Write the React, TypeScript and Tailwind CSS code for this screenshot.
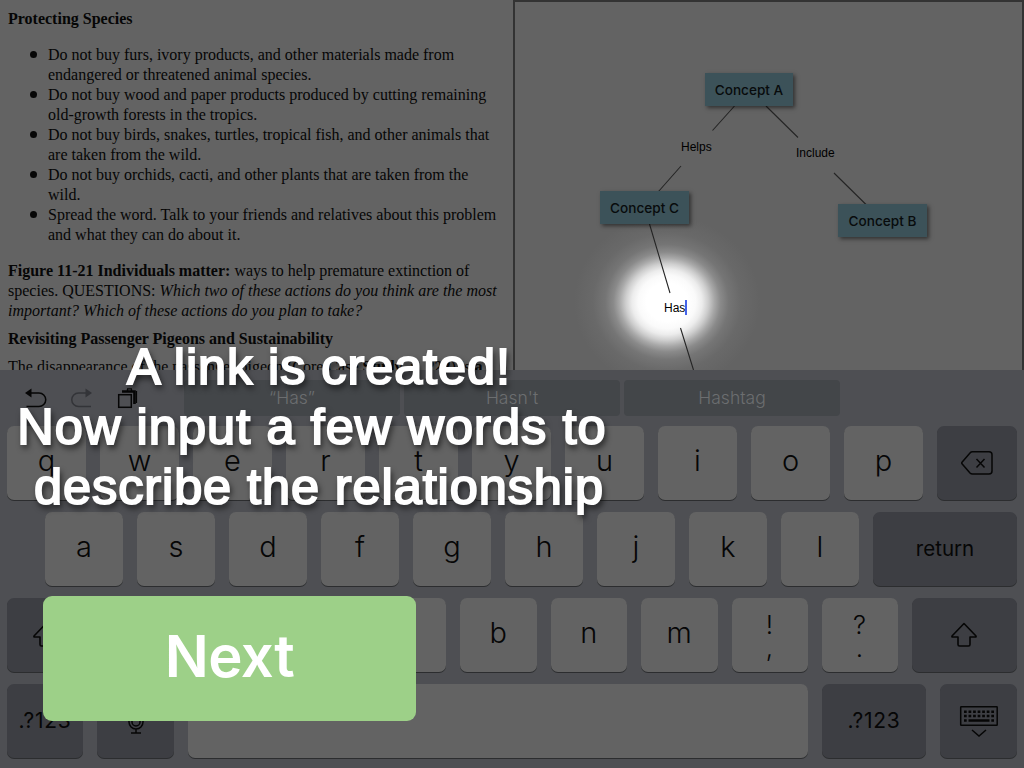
import React from "react";

const INK = "text-[#060606]";

function Key({ label, className = "", dark = false, children }: { label?: string; className?: string; dark?: boolean; children?: React.ReactNode }) {
  return (
    <div
      className={`flex h-[73.5px] shrink-0 items-center justify-center rounded-[7px] shadow-[0_1px_0_#2c2d2f] ${dark ? "bg-[#3d3e43]" : "bg-[#636363]"} ${className}`}
    >
      {label ? <span className={`-mt-[5px] text-[29px] leading-none font-[350] ${INK}`}>{label}</span> : children}
    </div>
  );
}

function TwoLevelKey({ top, bottom }: { top: string; bottom: string }) {
  return (
    <Key className="w-[76px]">
      <div className="flex flex-col items-center pt-[3px] text-[26px] leading-[26px] font-[350] text-[#060606]">
        <span>{top}</span>
        <span className="-mt-[3px]">{bottom}</span>
      </div>
    </Key>
  );
}

function ShiftIcon() {
  return (
    <svg width="28" height="26" viewBox="0 0 28 26" fill="none" stroke="#060606" strokeWidth="1.6" strokeLinejoin="round">
      <path d="M14 1.500 L26 14 Q26.400 15 25.400 15 H20 V22.500 Q20 24 18.500 24 H9.500 Q8 24 8 22.500 V15 H2.600 Q1.600 15 2 14 Z" />
    </svg>
  );
}

function Bullet({ children }: { children: React.ReactNode }) {
  return (
    <li className="flex">
      <span className="mt-[6px] mr-[11px] ml-[22px] h-[7px] w-[7px] shrink-0 rounded-full bg-[#060606]" />
      <span>{children}</span>
    </li>
  );
}

function Article() {
  return (
    <article className="h-[370px] w-[513px] shrink-0 overflow-hidden bg-[#636363] pl-2 font-['Liberation_Serif',serif] text-[16px] leading-5 whitespace-nowrap text-[#060606]">
      <h3 className="mt-[9px] font-bold">Protecting Species</h3>
      <ul className="mt-4">
        <Bullet>Do not buy furs, ivory products, and other materials made from<br />endangered or threatened animal species.</Bullet>
        <Bullet>Do not buy wood and paper products produced by cutting remaining<br />old-growth forests in the tropics.</Bullet>
        <Bullet>Do not buy birds, snakes, turtles, tropical fish, and other animals that<br />are taken from the wild.</Bullet>
        <Bullet>Do not buy orchids, cacti, and other plants that are taken from the<br />wild.</Bullet>
        <Bullet>Spread the word. Talk to your friends and relatives about this problem<br />and what they can do about it.</Bullet>
      </ul>
      <p className="mt-4">
        <b>Figure 11-21 Individuals matter:</b> ways to help premature extinction of<br />
        species. QUESTIONS: <i>Which two of these actions do you think are the most<br />important? Which of these actions do you plan to take?</i>
      </p>
      <h3 className="mt-2 font-bold">Revisiting Passenger Pigeons and Sustainability</h3>
      <p className="mt-2">The disappearance of the passenger pigeon (Core Case <b>Study</b>, p. <b>222</b>) is <b>a</b></p>
    </article>
  );
}

function Node({ label, className }: { label: string; className: string }) {
  return (
    <div className={`absolute flex h-[33px] items-center justify-center bg-[#3c5259] font-['Inter',sans-serif] text-[13.6px] font-medium text-[#080b0c] shadow-[2px_2px_4px_rgba(0,0,0,0.5)] ${className}`}>
      {label}
    </div>
  );
}

function ConceptMap() {
  return (
    <section className="relative h-[370px] w-[511px] shrink-0 overflow-hidden border-x-2 border-t-2 border-[#333333] bg-[#636363] font-['Liberation_Sans',sans-serif] text-[12px] leading-[14px] text-black">
      <div className="absolute top-[200px] left-[52px] h-[200px] w-[200px] bg-[radial-gradient(ellipse_103px_96px_at_center,#fff_0%,#fff_20%,#fafafa_28%,#ececec_34%,#cecece_40%,#a8a8a8_46%,#8a8a8a_52%,#757575_60%,#696969_72%,#636363_90%)]" />
      <svg className="absolute -top-[2px] -left-[3px]" width="512" height="370" viewBox="512 0 512 370" stroke="#252525" strokeWidth="1.1">
        <path d="M734.500 106 L712.500 130.500 M681 166 L658.500 191.500 M766 106 L798 137.500 M834 173 L866 204.500 M649.500 224 L670 293 M680.500 328 L693.500 370" fill="none" />
      </svg>
      <Node label="Concept A" className="top-[71px] left-[190px] w-[88px]" />
      <Node label="Concept C" className="top-[189px] left-[85px] w-[89px]" />
      <Node label="Concept B" className="top-[202px] left-[323px] w-[89px]" />
      <span className="absolute top-[138px] left-[166px]">Helps</span>
      <span className="absolute top-[144px] left-[281px]">Include</span>
      <span className="absolute top-[299px] left-[149px]">Has</span>
      <span className="absolute top-[298px] left-[170px] h-[15px] w-[2px] bg-[#4664e8]" />
    </section>
  );
}

function Keyboard() {
  return (
    <section className="flex h-[398px] flex-col bg-[#4e4f53] font-['Inter',sans-serif]">
      <div className="flex h-14 items-start pt-[10px]">
        <div className="flex w-[184px] pt-[8px] pl-[25px]">
          <svg className="mr-[22px]" width="24" height="20" viewBox="0 0 24 20" fill="none" stroke="#060606" strokeWidth="1.5">
            <path d="M3 5 H14 A6.500 6.500 0 0 1 14 18.500 H1.500" /><path d="M0 5 L6.500 0.500 V9.500 Z" fill="#060606" stroke="none" />
          </svg>
          <svg className="mr-[22px]" width="24" height="20" viewBox="0 0 24 20" fill="none" stroke="#333438" strokeWidth="1.5">
            <path d="M18 5 H7.500 A6.500 6.500 0 0 0 7.500 18.500 H20" /><path d="M21 5 L14.500 0.500 V9.500 Z" fill="#333438" stroke="none" />
          </svg>
          <svg width="22" height="22" viewBox="0 0 22 22" fill="none" stroke="#060606">
            <rect x="1.700" y="6.700" width="12.600" height="12.600" strokeWidth="1.500" />
            <path d="M5 3.500 H17.500 V16" strokeWidth="2.600" />
            <path d="M10 .9 H15 M10.500 1 V3 M14.500 1 V3" strokeWidth="1.300" />
            <path d="M19.500 3 V15" strokeWidth="1.200" />
          </svg>
        </div>
        <div className="flex gap-1 text-[17.5px] text-[#6c6e70]">
          {["“Has”", "Hasn't", "Hashtag"].map((word) => (
            <div key={word} className="flex h-9 w-[216px] items-center justify-center rounded-[4px] bg-[#434649] font-[350]">{word}</div>
          ))}
        </div>
      </div>
      <div className="flex flex-col gap-[12.5px] pl-[7px]">
        <div className="flex gap-[14px]">
          {"qwertyuiop".split("").map((k) => <Key key={k} label={k} className="w-[79px]" />)}
          <Key dark className="w-20">
            <svg width="32" height="24" viewBox="0 0 32 24" fill="none" stroke="#060606" strokeWidth="1.5" strokeLinejoin="round">
              <path d="M11.500 .8 H28 Q31 .8 31 3.800 V20 Q31 23 28 23 H11.500 Q10 23 9 22 L1 12.800 Q.5 12 1 11.200 L9 2 Q10 .8 11.500 .8 Z M15.500 8 L23.500 16.500 M23.500 8 L15.500 16.500" />
            </svg>
          </Key>
        </div>
        <div className="flex gap-[14px] pl-[38px]">
          {"asdfghjkl".split("").map((k) => <Key key={k} label={k} className="w-[78px]" />)}
          <Key dark className="w-36"><span className="pt-px text-[20.5px] text-[#060606]">return</span></Key>
        </div>
        <div className="flex gap-[14px]">
          <Key dark className="w-[77px]"><ShiftIcon /></Key>
          {"zxcvbnm".split("").map((k) => <Key key={k} label={k} className="w-[76.5px]" />)}
          <TwoLevelKey top="!" bottom="," />
          <TwoLevelKey top="?" bottom="." />
          <Key dark className="w-[105px]"><ShiftIcon /></Key>
        </div>
        <div className="flex gap-[14px]">
          <Key dark className="w-[76px]"><span className="text-[21px] tracking-[0.7px] text-[#060606]">.?123</span></Key>
          <Key dark className="w-[77px]">
            <svg width="18" height="29" viewBox="0 0 18 29" fill="none" stroke="#060606" strokeWidth="1.5">
              <rect x="5" y="0" width="8" height="20" rx="4" /><path d="M2 12 V16 A7 7 0 0 0 16 16 V12 M9 23 V27 M4 27 H14" />
            </svg>
          </Key>
          <Key className="w-[620px]" />
          <Key dark className="w-[104px]"><span className="text-[21px] tracking-[0.7px] text-[#060606]">.?123</span></Key>
          <Key dark className="w-[77px]">
            <svg width="40" height="36" viewBox="0 0 40 36" fill="none" stroke="#060606">
              <rect x="1.700" y="3.700" width="36.500" height="18.500" rx=".5" strokeWidth="1.500" />
              <path d="M5 8.700 H35 M5 13 H35" strokeWidth="2.500" strokeDasharray="2.700 1.850" />
              <path d="M5 17.500 H7.700 M9.500 17.500 H30.500 M32.300 17.500 H35" strokeWidth="2.500" />
              <path d="M13 27 L20 33 L27 27" strokeWidth="1.500" />
            </svg>
          </Key>
        </div>
      </div>
    </section>
  );
}

export default function App() {
  return (
    <main className="relative h-[768px] w-[1024px] overflow-hidden bg-[#4e4f53]">
      <div className="flex">
        <Article />
        <ConceptMap />
      </div>
      <Keyboard />
      <div className="absolute top-[337px] left-[8px] w-[622px] text-center font-['Liberation_Sans',sans-serif] text-[50.5px] leading-[60px] tracking-[0.9px] whitespace-nowrap text-white [-webkit-text-stroke:2px_white] [text-shadow:2px_4px_6px_rgba(0,0,0,0.8)]">
        <div>A link is created!</div>
        <div className="pr-[14px] tracking-[1.05px]">Now input a few words to</div>
        <div>describe the relationship</div>
      </div>
      <button className="absolute top-[596px] left-[43px] flex h-[125px] w-[373px] items-center justify-center rounded-[9px] bg-[#9dd088] pb-[4px] font-['Inter',sans-serif] text-[58px] font-[560] tracking-[-0.5px] text-white">
        Next
      </button>
    </main>
  );
}
